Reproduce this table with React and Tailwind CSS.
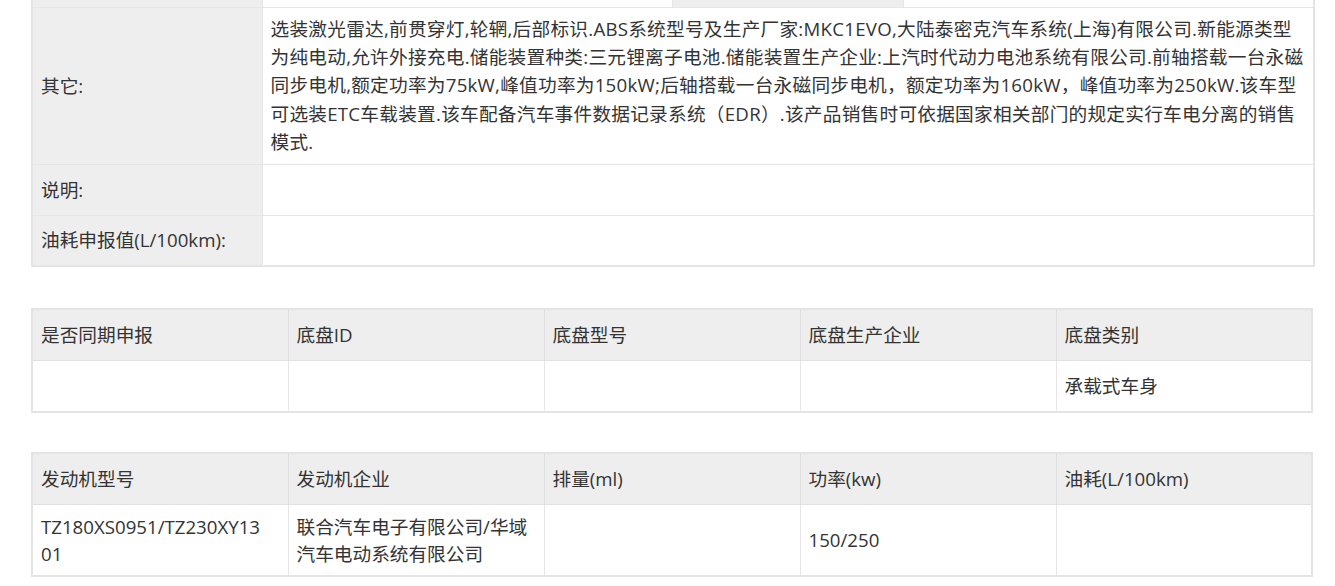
import React from "react";

const font = { fontFamily: '"Open Sans", "Noto Sans CJK SC", sans-serif' };

const chassisHead = ["是否同期申报", "底盘ID", "底盘型号", "底盘生产企业", "底盘类别"];
const chassisRow = [[""], [""], [""], [""], ["承载式车身"]];

const engineHead = ["发动机型号", "发动机企业", "排量(ml)", "功率(kw)", "油耗(L/100km)"];
const engineRow = [
  ["TZ180XS0951/TZ230XY13", "01"],
  ["联合汽车电子有限公司/华域", "汽车电动系统有限公司"],
  [""],
  ["150/250"],
  [""],
];

// line breaks as they fall in the original layout
const otherLines = [
  "选装激光雷达,前贯穿灯,轮辋,后部标识.ABS系统型号及生产厂家:MKC1EVO,大陆泰密克汽车系统(上海)有限公司.新能源类型",
  "为纯电动,允许外接充电.储能装置种类:三元锂离子电池.储能装置生产企业:上汽时代动力电池系统有限公司.前轴搭载一台永磁",
  "同步电机,额定功率为75kW,峰值功率为150kW;后轴搭载一台永磁同步电机，额定功率为160kW，峰值功率为250kW.该车型",
  "可选装ETC车载装置.该车配备汽车事件数据记录系统（EDR）.该产品销售时可依据国家相关部门的规定实行车电分离的销售",
  "模式.",
];

function FiveColTable({ head, row, bodyClass }) {
  return (
    <table className="w-[1282px] table-fixed border-collapse border-2 border-[#e4e4e4]">
      <tbody>
        <tr className="bg-[#eeeeee]">
          {head.map((h, i) => (
            <td
              key={i}
              className="h-[51px] border border-[#e0e0e0] px-2 align-middle leading-[28px]"
            >
              {h}
            </td>
          ))}
        </tr>
        <tr className="bg-white">
          {row.map((lines, i) => (
            <td
              key={i}
              className={`border border-[#e6e6e6] px-2 align-middle leading-[27px] ${bodyClass}`}
            >
              {lines.map((l, j) => (
                <span key={j} className="block whitespace-nowrap">
                  {l}
                </span>
              ))}
            </td>
          ))}
        </tr>
      </tbody>
    </table>
  );
}

export default function App() {
  return (
    <div
      className="min-h-[586px] bg-white pl-[31px] text-[18.67px] text-[#333333]"
      style={font}
    >
      {/* Basic info table, scrolled so only the bottom of the previous row shows */}
      <table className="w-[1282px] table-fixed border-collapse border-2 border-t-0 border-[#e4e4e4]">
        <colgroup>
          <col className="w-[230px]" />
          <col className="w-[410px]" />
          <col className="w-[231px]" />
          <col className="w-[411px]" />
        </colgroup>
        <tbody>
          <tr>
            <td className="h-[7px] border border-t-0 border-[#e6e6e6] bg-[#eeeeee] p-0" />
            <td className="h-[7px] border border-t-0 border-[#e6e6e6] bg-white p-0" />
            <td className="h-[7px] border border-t-0 border-[#e6e6e6] bg-[#eeeeee] p-0" />
            <td className="h-[7px] border border-t-0 border-[#e6e6e6] bg-white p-0" />
          </tr>
          <tr>
            <td className="border border-[#e6e6e6] bg-[#eeeeee] px-2 align-middle">其它:</td>
            <td
              colSpan={3}
              className="border border-[#e6e6e6] bg-white px-2 py-[7px] leading-[28.4px] tracking-[0.25px]"
            >
              {otherLines.map((l, i) => (
                <span key={i} className="block whitespace-nowrap">
                  {l}
                </span>
              ))}
            </td>
          </tr>
          <tr>
            <td className="h-[51px] border border-[#e6e6e6] bg-[#eeeeee] px-2 align-middle">
              说明:
            </td>
            <td colSpan={3} className="h-[51px] border border-[#e6e6e6] bg-white px-2" />
          </tr>
          <tr>
            <td className="h-[51px] border border-[#e6e6e6] bg-[#eeeeee] px-2 align-middle">
              油耗申报值(L/100km):
            </td>
            <td colSpan={3} className="h-[51px] border border-[#e6e6e6] bg-white px-2" />
          </tr>
        </tbody>
      </table>

      <div className="h-[41px]" />
      <FiveColTable head={chassisHead} row={chassisRow} bodyClass="h-[52px]" />

      <div className="h-[39px]" />
      <FiveColTable head={engineHead} row={engineRow} bodyClass="h-[72px]" />
    </div>
  );
}
